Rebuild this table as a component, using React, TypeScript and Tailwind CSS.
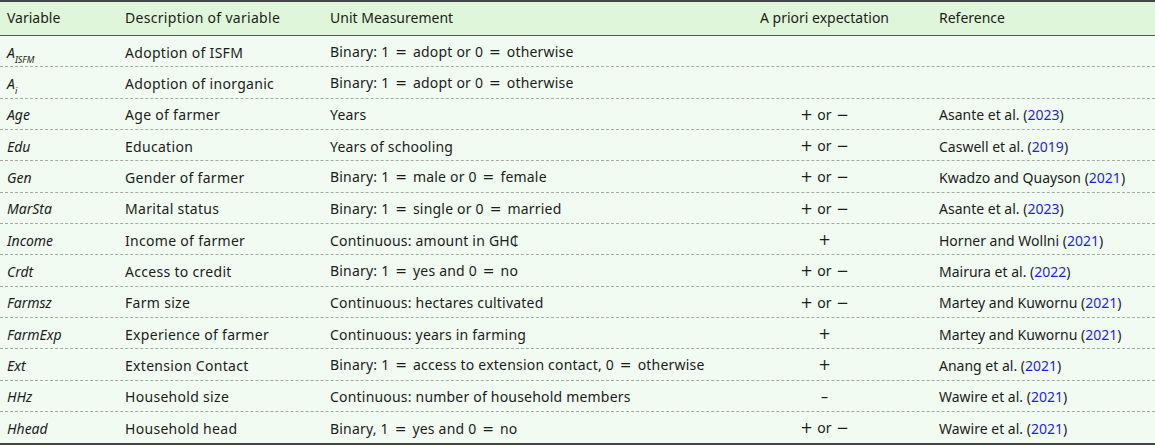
import React from "react";

const Eq = () => (
  <span className="mx-[2px]" style={{ fontFamily: "'DejaVu Sans', sans-serif" }}>
    =
  </span>
);

function U({ s }: { s: string }) {
  const parts = s.split(" = ");
  return (
    <>
      {parts.map((p, i) => (
        <React.Fragment key={i}>
          {i > 0 ? (
            <>
              {" "}
              <Eq />{" "}
            </>
          ) : null}
          {p}
        </React.Fragment>
      ))}
    </>
  );
}

function E({ s }: { s: string }) {
  const sym = "text-[15px] mx-[1px]";
  const f = { fontFamily: "'DejaVu Sans', sans-serif" };
  if (s === "+ or −")
    return (
      <>
        <span className={sym} style={f}>+</span> or <span className={sym} style={f}>−</span>
      </>
    );
  if (s === "+")
    return (
      <span className={sym} style={f}>
        +
      </span>
    );
  return <span>{s}</span>;
}

type Row = {
  v: React.ReactNode;
  d: string;
  u: string;
  e: string;
  r?: [string, string];
};

const rows: Row[] = [
  { v: <span>A<sub className="text-[9px] align-[-3px]">ISFM</sub></span>, d: "Adoption of ISFM", u: "Binary: 1 = adopt or 0 = otherwise", e: "" },
  { v: <span>A<sub className="text-[9px] align-[-3px]">i</sub></span>, d: "Adoption of inorganic", u: "Binary: 1 = adopt or 0 = otherwise", e: "" },
  { v: "Age", d: "Age of farmer", u: "Years", e: "+ or −", r: ["Asante et al. (", "2023"] },
  { v: "Edu", d: "Education", u: "Years of schooling", e: "+ or −", r: ["Caswell et al. (", "2019"] },
  { v: "Gen", d: "Gender of farmer", u: "Binary: 1 = male or 0 = female", e: "+ or −", r: ["Kwadzo and Quayson (", "2021"] },
  { v: "MarSta", d: "Marital status", u: "Binary: 1 = single or 0 = married", e: "+ or −", r: ["Asante et al. (", "2023"] },
  { v: "Income", d: "Income of farmer", u: "Continuous: amount in GH₵", e: "+", r: ["Horner and Wollni (", "2021"] },
  { v: "Crdt", d: "Access to credit", u: "Binary: 1 = yes and 0 = no", e: "+ or −", r: ["Mairura et al. (", "2022"] },
  { v: "Farmsz", d: "Farm size", u: "Continuous: hectares cultivated", e: "+ or −", r: ["Martey and Kuwornu (", "2021"] },
  { v: "FarmExp", d: "Experience of farmer", u: "Continuous: years in farming", e: "+", r: ["Martey and Kuwornu (", "2021"] },
  { v: "Ext", d: "Extension Contact", u: "Binary: 1 = access to extension contact, 0 = otherwise", e: "+", r: ["Anang et al. (", "2021"] },
  { v: "HHz", d: "Household size", u: "Continuous: number of household members", e: "–", r: ["Wawire et al. (", "2021"] },
  { v: "Hhead", d: "Household head", u: "Binary, 1 = yes and 0 = no", e: "+ or −", r: ["Wawire et al. (", "2021"] },
];

const grid = "grid grid-cols-[118px_205px_394px_215px_223px]";

export default function App() {
  return (
    <div
      className="w-[1155px] h-[446px] bg-white text-[#1c1c1c] text-[14px]"
      style={{ fontFamily: "'Noto Sans', 'DejaVu Sans', sans-serif" }}
    >
      <div className="border-t-2 border-b-2 border-[#444] bg-[#f1fbf1]">
        <div className={`${grid} h-[34px] pb-[3px] items-center bg-[#e0f6da] border-b border-[#555]`}>
          <div className="pl-[7px]">Variable</div>
          <div className="pl-[7px] tracking-[0.3px]">Description of variable</div>
          <div className="pl-[7px]">Unit Measurement</div>
          <div className="text-center">A priori expectation</div>
          <div className="pl-[7px]">Reference</div>
        </div>
        {rows.map((row, i) => (
          <div
            key={i}
            className={`${grid} h-[31.33px] items-center ${i < rows.length - 1 ? "border-b border-dashed border-[#a8a8a8]" : ""}`}
          >
            <div className="pl-[7px] pt-[2px] italic">{row.v}</div>
            <div className="pl-[7px] pt-[2px] tracking-[0.3px]">{row.d}</div>
            <div className="pl-[7px] pt-[2px] whitespace-nowrap tracking-[0.2px]">
              <U s={row.u} />
            </div>
            <div className="text-center pt-[2px]">
              <E s={row.e} />
            </div>
            <div className="pl-[7px] pt-[2px] whitespace-nowrap">
              {row.r ? (
                <>
                  {row.r[0]}
                  <span className="text-[#1f1fe6]">{row.r[1]}</span>)
                </>
              ) : null}
            </div>
          </div>
        ))}
      </div>
    </div>
  );
}
